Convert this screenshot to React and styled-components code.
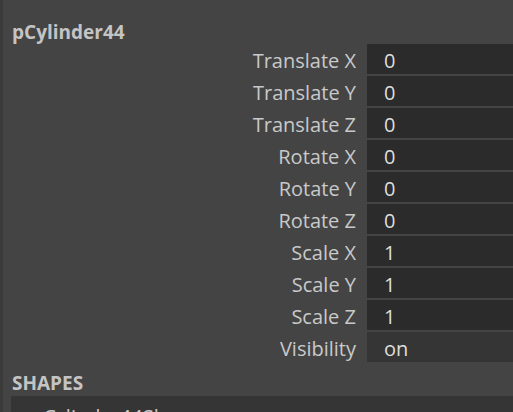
import React from 'react';
import styled, { createGlobalStyle } from 'styled-components';

const Global = createGlobalStyle`
  html, body {
    margin: 0;
    padding: 0;
    background: #444444;
    overflow: hidden;
  }
`

const Panel = styled.div`
  width: 513px;
  height: 412px;
  box-sizing: border-box;
  border-left: 3px solid #3a3a3a;
  background: #444444;
  font-family: "Open Sans", "Noto Sans", sans-serif;
  overflow: hidden;
`

const NodeTitle = styled.div`
  height: 44px;
  box-sizing: border-box;
  padding: 20px 0 0 9px;
  font-size: 19px;
  font-weight: 700;
  line-height: 24px;
  color: #c4c4c4;
`

const Attrs = styled.div`
  display: grid;
  grid-template-columns: 353px 1fr;
  column-gap: 11px;
  row-gap: 2px;
`

const Label = styled.div`
  height: 30px;
  box-sizing: border-box;
  padding-top: 3px;
  text-align: right;
  font-size: 20px;
  line-height: 27px;
  color: #c9c9c9;
  white-space: nowrap;
`

const Field = styled.div`
  height: 30px;
  box-sizing: border-box;
  padding: 3px 0 0 17px;
  background: ${p => (p.$enum ? '#353535' : '#2b2b2b')};
  font-size: 20px;
  line-height: 27px;
  color: #dedede;
`

const SectionTitle = styled.div`
  height: 34px;
  box-sizing: border-box;
  padding: 9px 0 0 9px;
  font-size: 19px;
  font-weight: 700;
  line-height: 24px;
  color: #c4c4c4;
`

const ShapeRow = styled.div`
  margin-left: 8px;
  height: 40px;
  box-sizing: border-box;
  background: #353535;
  padding: 9px 0 0 20px;
  font-size: 20px;
  line-height: 24px;
  color: #cacaca;
  white-space: nowrap;
`

const attributes = [
  ['Translate X', '0'],
  ['Translate Y', '0'],
  ['Translate Z', '0'],
  ['Rotate X', '0'],
  ['Rotate Y', '0'],
  ['Rotate Z', '0'],
  ['Scale X', '1'],
  ['Scale Y', '1'],
  ['Scale Z', '1'],
  ['Visibility', 'on', true],
]

export default function App() {
  return (
    <Panel>
      <Global />
      <NodeTitle>pCylinder44</NodeTitle>
      <Attrs>
        {attributes.map(([name, value, isEnum]) => (
          <React.Fragment key={name}>
            <Label>{name}</Label>
            <Field $enum={isEnum}>{value}</Field>
          </React.Fragment>
        ))}
      </Attrs>
      <SectionTitle>SHAPES</SectionTitle>
      <ShapeRow>pCylinder44Shape</ShapeRow>
    </Panel>
  )
}
